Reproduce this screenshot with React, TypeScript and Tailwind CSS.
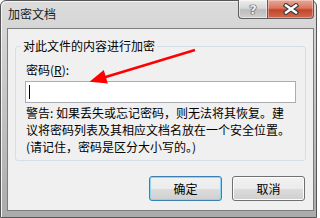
import React from "react"

function HelpButton() {
  return (
    <div className="w-[29px] h-[19px] flex items-center justify-center rounded-bl-[4px] border border-t-0 border-r-0 border-[#5c5c5c] bg-[linear-gradient(to_bottom,#eeeeee_0%,#d6d6d6_45%,#bcbcbc_55%,#cfcfcf_100%)] shadow-[inset_0_0_0_1px_rgba(255,255,255,0.5)]">
      <span className="font-['DejaVu_Sans',sans-serif] font-bold text-[13px] leading-none text-[#f2f2f2] [text-shadow:0_0_1px_#333,0_0_1px_#333,0_0_1px_#333]">
        ?
      </span>
    </div>
  )
}

function CloseButton() {
  return (
    <div className="w-[47px] h-[19px] flex items-center justify-center rounded-br-[4px] border border-t-0 border-[#5c5c5c] bg-[linear-gradient(to_bottom,#e9a898_0%,#d9765e_45%,#c2452a_55%,#d46a50_100%)] shadow-[inset_0_0_0_1px_rgba(255,255,255,0.35)]">
      <svg width="16" height="12" viewBox="0 0 16 12">
        <path d="M3 2.5 L13 9.5 M13 2.5 L3 9.5" stroke="#3b3b3b" strokeWidth="4.6" strokeLinecap="square" fill="none" />
        <path d="M3 2.5 L13 9.5 M13 2.5 L3 9.5" stroke="#ffffff" strokeWidth="2.4" strokeLinecap="square" fill="none" />
      </svg>
    </div>
  )
}

function DialogButton({ label, focused }: { label: string; focused?: boolean }) {
  return (
    <button
      className={
        focused
          ? "w-[73px] h-[25px] rounded-[3px] border border-[#3c7fb1] bg-[linear-gradient(to_bottom,#f2f2f2_0%,#ebebeb_50%,#dddddd_50%,#cfcfcf_100%)] shadow-[inset_0_0_0_1px_#8fd3f5] text-[12px] leading-none text-black"
          : "w-[73px] h-[25px] rounded-[3px] border border-[#707070] bg-[linear-gradient(to_bottom,#f2f2f2_0%,#ebebeb_50%,#dddddd_50%,#cfcfcf_100%)] shadow-[inset_0_0_0_1px_#fcfcfc] text-[12px] leading-none text-black"
      }
    >
      {label}
    </button>
  )
}

export default function App() {
  return (
    <div className="relative w-[320px] h-[218px] bg-white overflow-hidden font-['Noto_Sans_CJK_SC',sans-serif] text-[12px] text-black">
      <div className="flex flex-col w-[317px] h-[218px] border border-[#565656] rounded-t-[6px] bg-[linear-gradient(to_bottom,#dcdcdc_0%,#c8c8c8_40%,#ababab_100%)] shadow-[inset_1px_1px_0_#f4f4f4]">
        {/* title bar */}
        <div className="flex h-[27px] shrink-0">
          <div className="flex-1 pl-[7px] pt-[5px] leading-[16px] text-[#1a1a1a]">加密文档</div>
          <div className="flex h-[19px] mr-[2px] -mt-[1px]">
            <HelpButton />
            <CloseButton />
          </div>
        </div>

        {/* client area */}
        <div className="flex-1 flex flex-col ml-[6px] mr-[2px] mb-[6px] border border-[#7d7d7d] bg-[#f0f0f0]">
          <fieldset className="h-[123px] ml-[7px] mt-[9px] w-[291px] border border-[#d5dfe5] rounded-[3px] px-[9px]">
            <legend className="ml-[-4px] px-[2px] leading-[16px]">对此文件的内容进行加密</legend>
            <div className="mt-[8px] pl-[1px] leading-[16px]">
              密码(<span className="underline">R</span>):
            </div>
            <div className="mt-[3px] h-[22px] w-[271px] border border-[#abadb3] bg-white flex items-center">
              <div className="ml-[3px] w-px h-[14px] bg-black" />
            </div>
            <div className="mt-[1px] pl-[1px] leading-[17px]">
              <div>警告: 如果丢失或忘记密码，则无法将其恢复。建</div>
              <div>议将密码列表及其相应文档名放在一个安全位置。</div>
              <div>(请记住，密码是区分大小写的。)</div>
            </div>
          </fieldset>

          <div className="flex justify-end gap-[10px] pr-[8px] mt-[15px]">
            <DialogButton label="确定" focused />
            <DialogButton label="取消" />
          </div>
        </div>
      </div>

      {/* red annotation arrow */}
      <svg className="absolute inset-0 pointer-events-none" width="320" height="218" viewBox="0 0 320 218">
        <line x1="195" y1="50" x2="104" y2="77.5" stroke="#ff0000" strokeWidth="2.5" />
        <polygon points="89.5,81.7 103.8,70.1 107.8,83.5" fill="#ff0000" />
      </svg>
    </div>
  )
}
